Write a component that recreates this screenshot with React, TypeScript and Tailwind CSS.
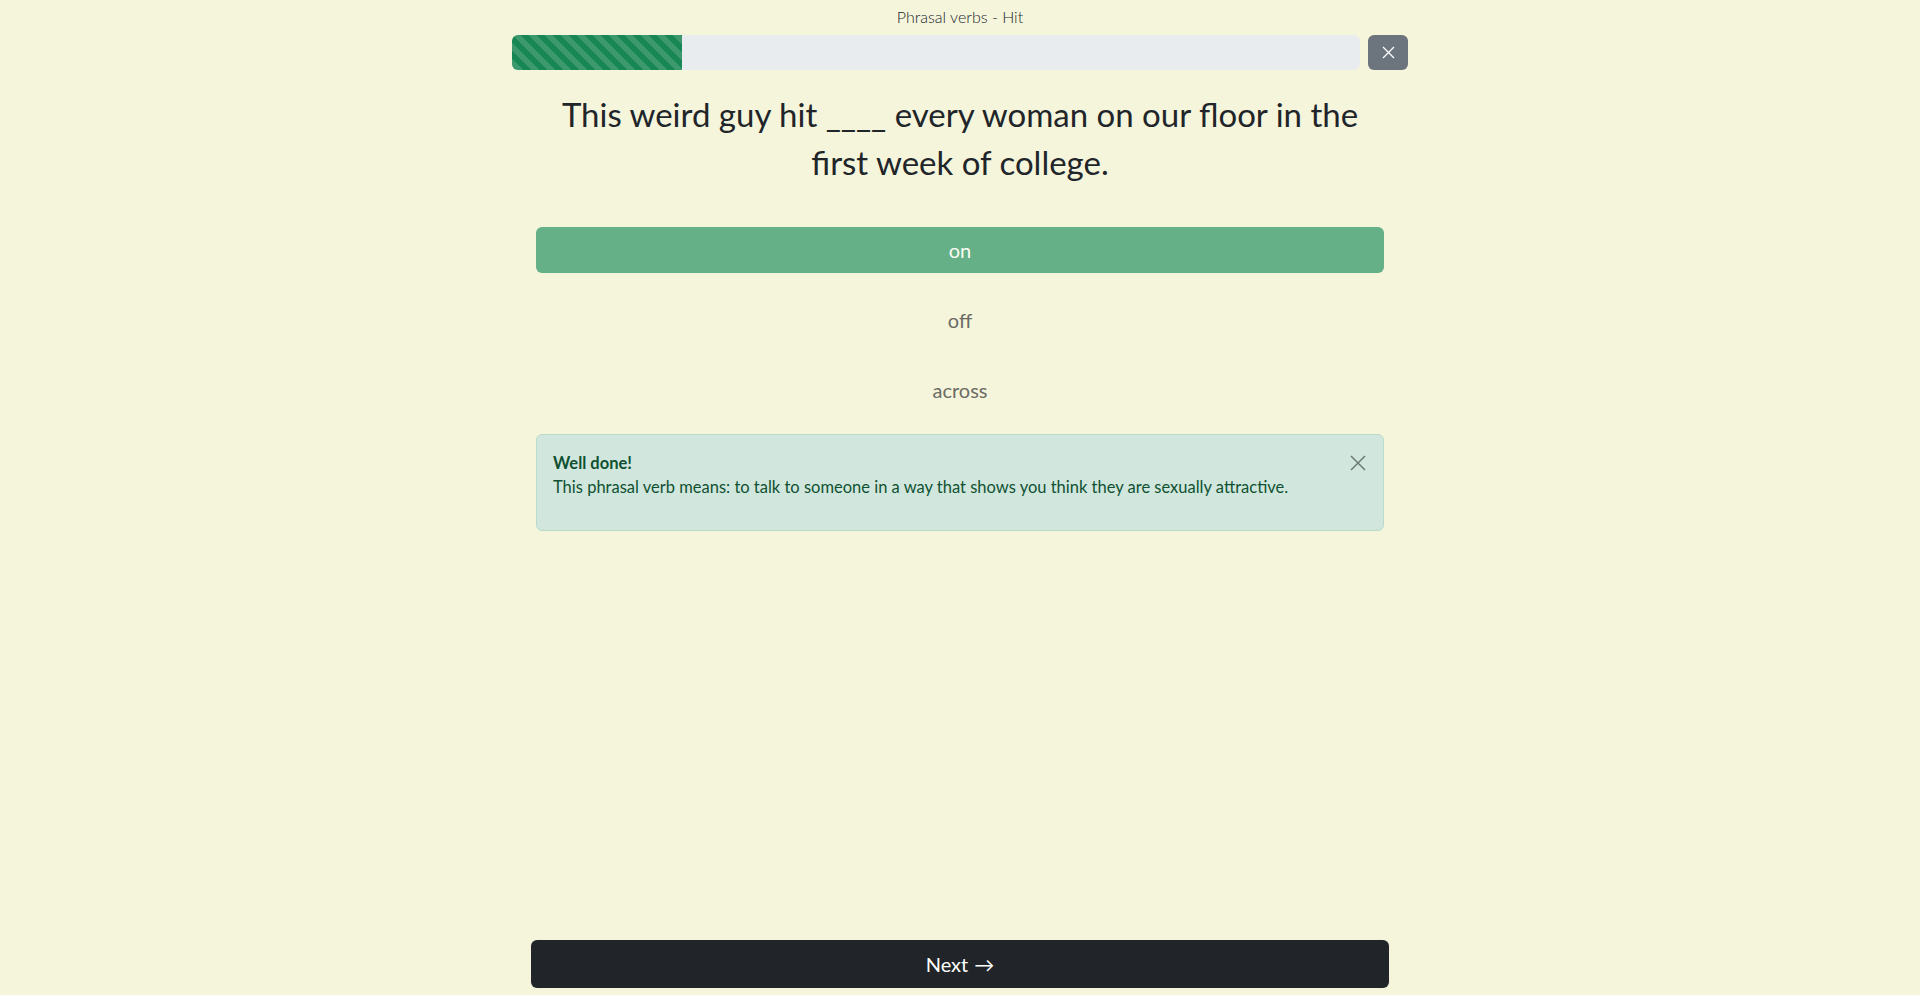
import React from 'react';

export default function App() {
  const options = [
    { label: 'on', correct: true },
    { label: 'off', correct: false },
    { label: 'across', correct: false },
  ];

  return (
    <div className="min-h-[995px] bg-[#f5f5dc] font-['Lato','Noto_Sans',sans-serif] text-[#212529]">
      <div className="mx-auto w-[896px]">
        {/* header */}
        <div className="pt-[5px] text-center text-[16px] font-light leading-[24px] text-[#212529]">Phrasal verbs - Hit</div>
        <div className="mt-[6px] flex h-[35px] gap-2">
          <div className="flex flex-1 overflow-hidden rounded-[6px] bg-[#e9ecef]">
            <div className="h-full w-[20%] bg-[#198754] bg-[linear-gradient(45deg,rgba(255,255,255,0.15)_25%,transparent_25%,transparent_50%,rgba(255,255,255,0.15)_50%,rgba(255,255,255,0.15)_75%,transparent_75%,transparent)] bg-[length:16px_16px]" />
          </div>
          <button className="flex w-[40px] items-center justify-center rounded-[6px] bg-[#6c757d]">
            <svg width="13" height="13" viewBox="0 0 13 13" fill="none" stroke="white" strokeWidth="1.3">
              <path d="M1 1L12 12M12 1L1 12" />
            </svg>
          </button>
        </div>

        {/* question */}
        <div className="px-6">
          <h3 className="mt-[20px] text-center text-[33px] leading-[48px]">
            This weird guy hit ____ every woman on our floor in the
            <br />
            first week of college.
          </h3>

          <div className="mt-[41px] flex flex-col gap-6">
            {options.map((o) => (
              <button
                key={o.label}
                className={
                  o.correct
                    ? 'h-[46px] rounded-[6px] bg-[#66b087] text-[20px] text-[#fcfcf3]'
                    : 'h-[46px] rounded-[6px] text-[20px] text-[#6b6b64]'
                }
              >
                {o.label}
              </button>
            ))}
          </div>

          {/* feedback */}
          <div className="relative mt-[21px] h-[97px] rounded-[6px] border border-[#badbcc] bg-[#d1e7dd] px-4 pt-[16px] text-[16.5px] leading-[24px] text-[#0f5132]">
            <div className="font-bold">Well done!</div>
            <div>This phrasal verb means: to talk to someone in a way that shows you think they are sexually attractive.</div>
            <button className="absolute right-[17px] top-[20px] flex h-[16px] w-[16px] items-center justify-center">
              <svg width="16" height="16" viewBox="0 0 16 16" fill="none" stroke="#6b7a74" strokeWidth="1.5">
                <path d="M1 1L15 15M15 1L1 15" />
              </svg>
            </button>
          </div>
        </div>
      </div>

      {/* next */}
      <div className="fixed bottom-[7px] left-0 right-0 flex justify-center">
        <button className="flex h-[48px] w-[858px] items-center justify-center gap-[6px] rounded-[6px] bg-[#212529] text-[20px] text-white">
          <span>Next</span>
          <span>→</span>
        </button>
      </div>
    </div>
  );
}
